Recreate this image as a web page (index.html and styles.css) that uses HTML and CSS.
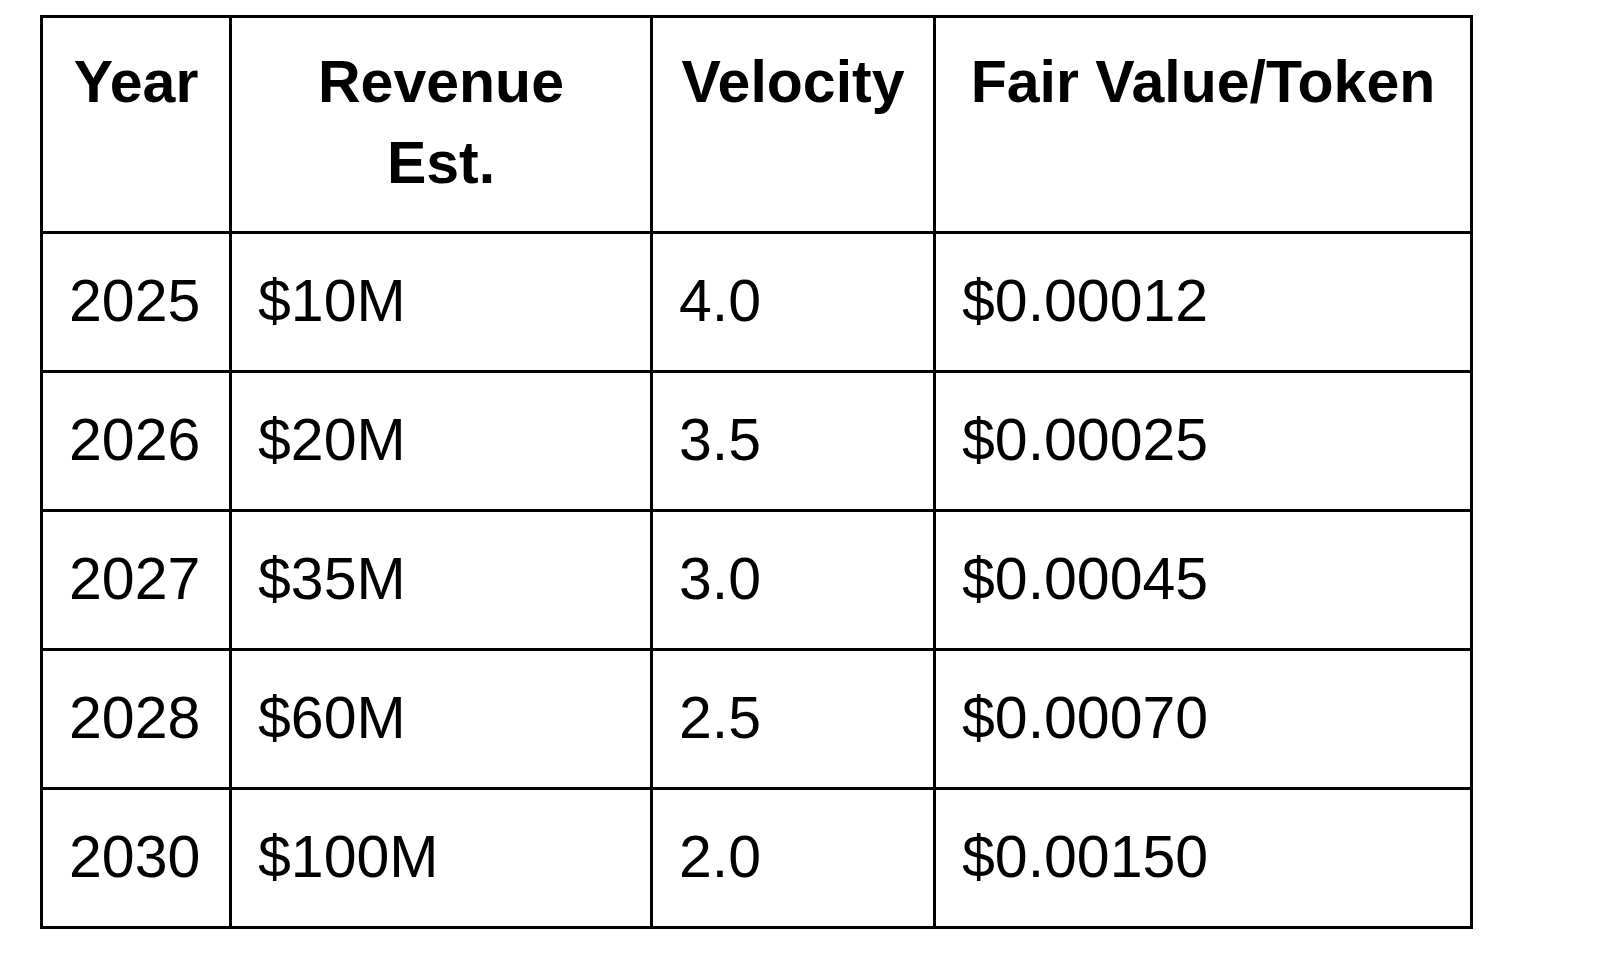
FILE: index.html
```html
<!DOCTYPE html>
<html lang="en">
<head>
<meta charset="utf-8">
<title>Token valuation</title>
<link rel="stylesheet" href="styles.css">
</head>
<body>
<table class="valuation">
  <colgroup>
    <col class="c-year">
    <col class="c-rev">
    <col class="c-vel">
    <col class="c-fair">
  </colgroup>
  <thead>
    <tr class="head-row">
      <th>Year</th>
      <th>Revenue<br>Est.</th>
      <th>Velocity</th>
      <th>Fair Value/Token</th>
    </tr>
  </thead>
  <tbody>
    <tr><td>2025</td><td>$10M</td><td>4.0</td><td>$0.00012</td></tr>
    <tr><td>2026</td><td>$20M</td><td>3.5</td><td>$0.00025</td></tr>
    <tr><td>2027</td><td>$35M</td><td>3.0</td><td>$0.00045</td></tr>
    <tr><td>2028</td><td>$60M</td><td>2.5</td><td>$0.00070</td></tr>
    <tr><td>2030</td><td>$100M</td><td>2.0</td><td>$0.00150</td></tr>
  </tbody>
</table>
</body>
</html>
```

FILE: styles.css
```css
html, body {
  margin: 0;
  background: #fff;
}
body {
  padding: 15px 0 0 40px;
  font-family: "Liberation Sans", Arial, sans-serif;
  color: #000;
}
.valuation {
  border-collapse: separate;
  border-spacing: 0;
  table-layout: fixed;
  width: 1433px;
  border-top: 3px solid #000;
  border-left: 3px solid #000;
  font-size: 59px;
}
.c-year { width: 189px; }
.c-rev { width: 421px; }
.c-vel { width: 283px; }
.c-fair { width: 537px; }

.valuation th,
.valuation td {
  box-sizing: border-box;
  border-right: 3px solid #000;
  border-bottom: 3px solid #000;
  padding: 0;
}
.valuation th {
  height: 216px;
  vertical-align: top;
  text-align: center;
  font-weight: bold;
  line-height: 81px;
  padding-top: 24px;
}
.valuation td {
  height: 139px;
  vertical-align: middle;
  text-align: left;
  padding: 0 0 3px 26px;
  line-height: normal;
  white-space: nowrap;
}
```
